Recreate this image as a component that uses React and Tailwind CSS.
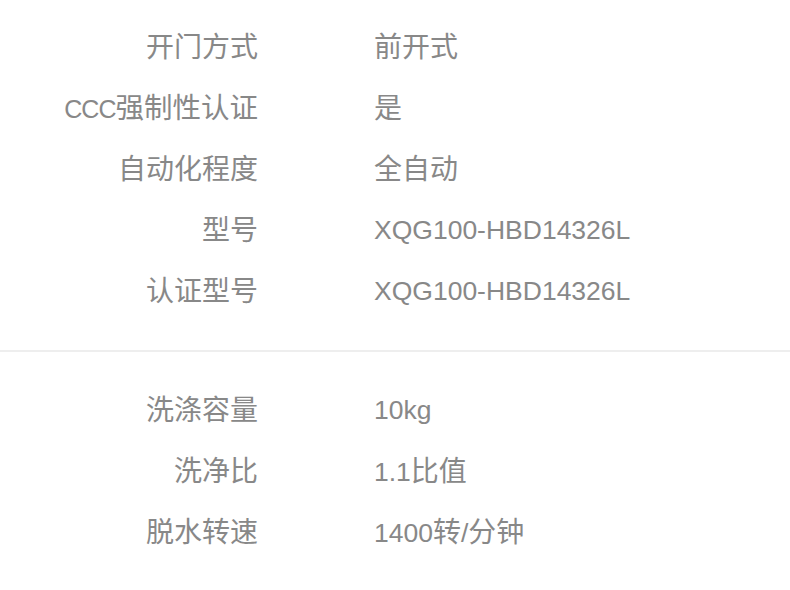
function Txt({ s }) {
  const parts = s.match(/[\u4e00-\u9fff]+|[^\u4e00-\u9fff]+/g) || [];
  return (
    <>
      {parts.map((p, i) =>
        /[\u4e00-\u9fff]/.test(p) ? (
          <span key={i} className="text-[28px]">{p}</span>
        ) : (
          <span key={i} className="text-[26.5px]">{p}</span>
        )
      )}
    </>
  );
}

export default function App() {
  const sec1 = [
    ["开门方式", "前开式"],
    ["CCC", "是"],
    ["自动化程度", "全自动"],
    ["型号", "XQG100-HBD14326L"],
    ["认证型号", "XQG100-HBD14326L"],
  ];
  const sec2 = [
    ["洗涤容量", "10kg"],
    ["洗净比", "1.1比值"],
    ["脱水转速", "1400转/分钟"],
  ];
  const Row = ({ k, v }) => (
    <div className="flex h-[61px] items-center">
      <div className="w-[258px] shrink-0 text-right whitespace-nowrap">
        {k === "CCC" ? (
          <>
            <span className="text-[25px] tracking-[-1px]">CCC</span>
            <span className="text-[28.5px]">强制性认证</span>
          </>
        ) : (
          <Txt s={k} />
        )}
      </div>
      <div className="ml-[116px] whitespace-nowrap">
        <Txt s={v} />
      </div>
    </div>
  );
  return (
    <div
      className="w-[790px] h-[590px] bg-white text-[#888888] text-[27px] leading-none overflow-hidden"
      style={{ fontFamily: '"Liberation Sans", "Noto Sans CJK SC", sans-serif' }}
    >
      <div className="pt-[17px]">
        {sec1.map(([k, v]) => (
          <Row key={k} k={k} v={v} />
        ))}
      </div>
      <div className="mt-[28px] h-[2px] bg-[#eeeeee]" />
      <div className="pt-[28px]">
        {sec2.map(([k, v]) => (
          <Row key={k} k={k} v={v} />
        ))}
      </div>
    </div>
  );
}
